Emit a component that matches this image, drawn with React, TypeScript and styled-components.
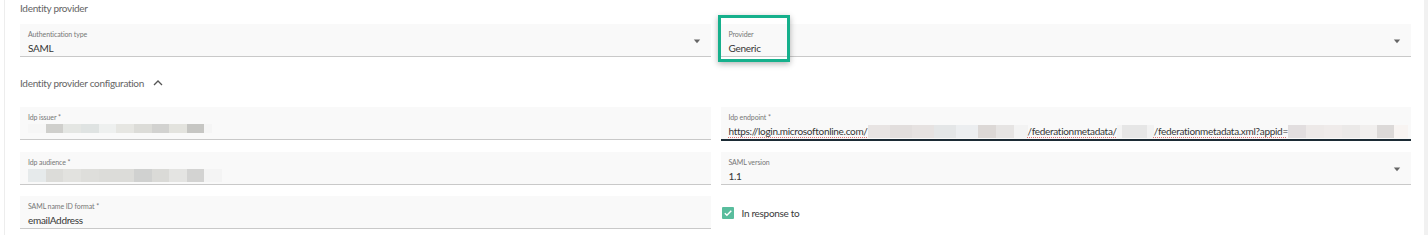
import React from 'react';
import styled, { createGlobalStyle } from 'styled-components';

const GlobalStyle = createGlobalStyle`
  html, body {
    margin: 0;
    padding: 0;
    background: #ffffff;
  }
  body {
    font-family: Lato, 'Open Sans', sans-serif;
    color: #222;
  }
`;

type Shade = { c: string; w: number };

const issuerShades: Shade[] = [
  { c: '#f6f6f6', w: 18 },
  { c: '#cfcfcc', w: 17 },
  { c: '#e4e6e3', w: 18 },
  { c: '#dfe3e2', w: 18 },
  { c: '#eef0ef', w: 17 },
  { c: '#e6e6e2', w: 18 },
  { c: '#dcdcd8', w: 18 },
  { c: '#d2d2d0', w: 17 },
  { c: '#e3e3de', w: 18 },
  { c: '#c6c6c3', w: 17 },
  { c: '#f5f5f5', w: 8 },
];

const audienceShades: Shade[] = [
  { c: '#e6eaeb', w: 18 },
  { c: '#dcdcd9', w: 17 },
  { c: '#e2e2df', w: 18 },
  { c: '#dededb', w: 18 },
  { c: '#dcdcd9', w: 35 },
  { c: '#d0d1d0', w: 18 },
  { c: '#dadad7', w: 17 },
  { c: '#e4e4e2', w: 18 },
  { c: '#d3d3d2', w: 17 },
  { c: '#f4f4f4', w: 18 },
];

const tenantShades: Shade[] = [
  { c: '#e8e4e3', w: 22 },
  { c: '#e2dedd', w: 22 },
  { c: '#e6e2e1', w: 22 },
  { c: '#e4e6e7', w: 22 },
  { c: '#eceef0', w: 22 },
  { c: '#dcd8d6', w: 18 },
  { c: '#e6e4e3', w: 18 },
  { c: '#f3f3f3', w: 14 },
];

const middleShades: Shade[] = [
  { c: '#f4f4f4', w: 5 },
  { c: '#e6e6e6', w: 25 },
  { c: '#f2f2f2', w: 7 },
];

const appShades: Shade[] = [
  { c: '#e2dedf', w: 18 },
  { c: '#ede9e8', w: 18 },
  { c: '#efebea', w: 18 },
  { c: '#ebe9e8', w: 18 },
  { c: '#f1efee', w: 17 },
  { c: '#dcd9d8', w: 17 },
  { c: '#f8f4f2', w: 14 },
];

function Redacted({ shades, h = 9 }: { shades: Shade[]; h?: number }) {
  return (
    <Blur $h={h}>
      {shades.map((s, i) => (
        <span key={i} style={{ width: s.w, background: s.c }} />
      ))}
    </Blur>
  );
}

function Caret() {
  return (
    <svg width="8" height="5" viewBox="0 0 8 5">
      <path d="M0.8 0.6h6.4L4 4.2z" fill="#666" />
    </svg>
  );
}

export default function App() {
  return (
    <>
      <GlobalStyle />
      <Page>
        <Content>
          <SectionTitle>Identity provider</SectionTitle>
          <Grid>
            <Field>
              <Label>Authentication type</Label>
              <Value>SAML</Value>
              <ArrowSlot>
                <Caret />
              </ArrowSlot>
            </Field>
            <Highlighted>
              <Field>
                <Label>Provider</Label>
                <Value>Generic</Value>
                <ArrowSlot>
                  <Caret />
                </ArrowSlot>
              </Field>
              <HighlightBox />
            </Highlighted>
          </Grid>

          <SectionTitle $collapsible>
            Identity provider configuration
            <svg width="10" height="6" viewBox="0 0 10 6">
              <path d="M1 5l4-4 4 4" fill="none" stroke="#555" strokeWidth="1.3" />
            </svg>
          </SectionTitle>

          <Grid $rowGap={11}>
            <Field>
              <Label>Idp issuer *</Label>
              <Value>
                <Redacted shades={issuerShades} />
              </Value>
            </Field>
            <Field $focused>
              <Label>Idp endpoint *</Label>
              <Value>
                <Spell>https://login.microsoftonline.com/</Spell>
                <Redacted shades={tenantShades} h={13} />
                <Spell>/federationmetadata/</Spell>
                <Redacted shades={middleShades} h={13} />
                <Spell>/federationmetadata.xml?appid=</Spell>
                <Redacted shades={appShades} h={13} />
              </Value>
            </Field>

            <Field>
              <Label>Idp audience *</Label>
              <Value>
                <Redacted shades={audienceShades} h={13} />
              </Value>
            </Field>
            <Field>
              <Label>SAML version</Label>
              <Value>1.1</Value>
              <ArrowSlot>
                <Caret />
              </ArrowSlot>
            </Field>

            <Field>
              <Label>SAML name ID format *</Label>
              <Value>emailAddress</Value>
            </Field>
            <CheckRow>
              <CheckBox>
                <svg width="10" height="10" viewBox="0 0 10 10">
                  <path d="M1.8 5.2l2.1 2.1 4.4-4.6" fill="none" stroke="#fff" strokeWidth="1.4" />
                </svg>
              </CheckBox>
              In response to
            </CheckRow>
          </Grid>
        </Content>
        <Scrollbar />
      </Page>
    </>
  );
}

const Page = styled.div`
  display: flex;
  height: 235px;
  overflow: hidden;
`;

const Content = styled.div`
  flex: 1;
  min-width: 0;
  margin-left: 4px;
  border-left: 1px solid #ededed;
  padding: 0 13px 0 15px;
  display: flex;
  flex-direction: column;
`;

const Scrollbar = styled.div`
  width: 4px;
  background: #f1f1f1;
`;

const SectionTitle = styled.div<{ $collapsible?: boolean }>`
  display: flex;
  align-items: center;
  gap: 9px;
  font-size: 10px;
  letter-spacing: -0.3px;
  color: #656565;
  height: ${(p) => (p.$collapsible ? '22px' : '14px')};
  margin: ${(p) => (p.$collapsible ? '15px 0 13px' : '1px 0 9px')};
`;

const Grid = styled.div<{ $rowGap?: number }>`
  display: grid;
  grid-template-columns: minmax(0, 1fr) minmax(0, 1fr);
  column-gap: 10px;
  row-gap: ${(p) => p.$rowGap ?? 0}px;
`;

const Field = styled.div<{ $focused?: boolean }>`
  position: relative;
  height: ${(p) => (p.$focused ? '34px' : '33px')};
  background: #f9f9f9;
  border-bottom: ${(p) => (p.$focused ? '2px solid #1c2b35' : '1px solid #c9c9c9')};
  padding: 5px 30px 0 8px;
  box-sizing: border-box;
  display: flex;
  flex-direction: column;
  overflow: hidden;
`;

const Label = styled.div`
  font-size: 7px;
  letter-spacing: -0.1px;
  color: #777;
  line-height: 10px;
`;

const Value = styled.div`
  display: flex;
  align-items: center;
  font-size: 10px;
  letter-spacing: -0.3px;
  color: #363636;
  line-height: 14px;
  margin-top: 2px;
  white-space: nowrap;
`;

const Spell = styled.span`
  text-decoration: underline dotted #e07070;
  text-underline-offset: 2px;
  text-decoration-thickness: 1px;
`;

const Blur = styled.span<{ $h: number }>`
  display: inline-flex;
  flex-shrink: 0;
  height: ${(p) => p.$h}px;
  & > span {
    display: block;
    height: 100%;
  }
`;

const ArrowSlot = styled.div`
  position: absolute;
  right: 10px;
  top: 15px;
  display: flex;
`;

const Highlighted = styled.div`
  position: relative;
`;

const HighlightBox = styled.div`
  position: absolute;
  left: -3px;
  top: -9px;
  width: 72px;
  height: 47px;
  box-sizing: border-box;
  border: 3px solid #16b08c;
  box-shadow: 0 2px 6px rgba(0, 0, 0, 0.3);
  pointer-events: none;
`;

const CheckRow = styled.div`
  display: flex;
  align-items: center;
  gap: 8px;
  height: 33px;
  padding-left: 1px;
  font-size: 10px;
  letter-spacing: -0.3px;
  color: #3a3a3a;
`;

const CheckBox = styled.span`
  width: 12px;
  height: 12px;
  border-radius: 1px;
  background: #59bd9d;
  display: flex;
  align-items: center;
  justify-content: center;
`;
